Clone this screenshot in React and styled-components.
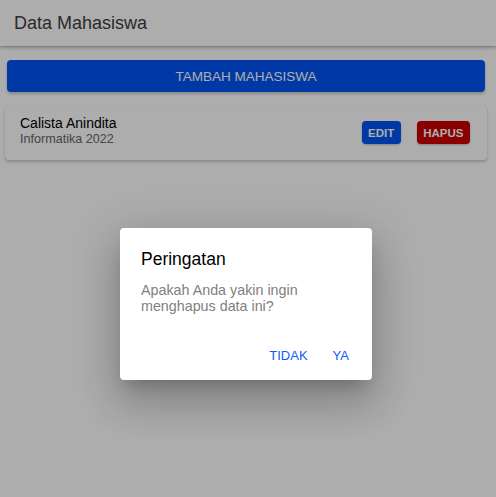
import React from "react";
import styled, { createGlobalStyle } from "styled-components";

const GlobalStyle = createGlobalStyle`
  html, body {
    margin: 0;
    padding: 0;
    background: #ffffff;
    font-family: "Liberation Sans", Arial, sans-serif;
  }
`;

const Page = styled.div`
  position: relative;
  width: 100%;
  height: 497px;
  overflow: hidden;
  background: #ffffff;
`;

const Header = styled.header`
  height: 46px;
  display: flex;
  align-items: center;
  padding: 0 14px;
  background: #ffffff;
  box-shadow: 0 2px 4px rgba(0, 0, 0, 0.22), 0 1px 1px rgba(0, 0, 0, 0.12);
`;

const Title = styled.h1`
  margin: 0;
  font-size: 18px;
  font-weight: 400;
  color: #404040;
`;

const Content = styled.main`
  padding: 14px 9px 0 5px;
  display: flex;
  flex-direction: column;
  gap: 13px;
`;

const AddButton = styled.button`
  margin: 0 2px;
  height: 32px;
  border: none;
  border-radius: 4px;
  background: #0054f4;
  color: #ffffff;
  font-family: inherit;
  font-size: 13.5px;
  box-shadow: 0 2px 3px rgba(0, 0, 0, 0.2);
`;

const Card = styled.div`
  height: 55px;
  display: flex;
  align-items: center;
  justify-content: space-between;
  padding: 0 17px 0 15px;
  background: #ffffff;
  border-radius: 4px;
  box-shadow: 0 2px 3px rgba(0, 0, 0, 0.2), 0 0 1px rgba(0, 0, 0, 0.15);
`;

const Info = styled.div`
  display: flex;
  flex-direction: column;
  margin-top: -4px;
`;

const Name = styled.span`
  font-size: 14px;
  color: #000000;
  line-height: 16px;
`;

const Sub = styled.span`
  font-size: 12.6px;
  color: #666666;
  line-height: 16px;
`;

const Actions = styled.div`
  display: flex;
  gap: 16px;
  align-items: center;
`;

const SmallButton = styled.button`
  height: 23px;
  padding: 0 6.5px;
  border: none;
  border-radius: 4px;
  background: ${(p) => p.$bg};
  color: #ffffff;
  font-family: inherit;
  font-size: 11.5px;
  font-weight: 700;
  box-shadow: 0 1px 2px rgba(0, 0, 0, 0.25);
`;

const Backdrop = styled.div`
  position: absolute;
  inset: 0;
  background: rgba(0, 0, 0, 0.32);
  display: flex;
  align-items: flex-start;
  justify-content: center;
  padding: 228px 4px 0 0;
`;

const Dialog = styled.div`
  width: 252px;
  height: 152px;
  box-sizing: border-box;
  background: #ffffff;
  border-radius: 4px;
  padding: 21px 21px 0 21px;
  display: flex;
  flex-direction: column;
  box-shadow: 0 11px 15px -7px rgba(0, 0, 0, 0.2),
    0 24px 38px 3px rgba(0, 0, 0, 0.14), 0 9px 46px 8px rgba(0, 0, 0, 0.12);
`;

const DialogTitle = styled.h2`
  margin: 0;
  font-size: 17.5px;
  font-weight: 400;
  color: #000000;
`;

const Message = styled.p`
  margin: 12px 0 0;
  font-size: 14.3px;
  line-height: 16px;
  color: #808080;
  width: 190px;
`;

const DialogActions = styled.div`
  margin-top: auto;
  margin-bottom: 17px;
  margin-right: 2px;
  display: flex;
  justify-content: flex-end;
  gap: 25px;
`;

const TextButton = styled.button`
  border: none;
  background: none;
  padding: 0;
  font-family: inherit;
  font-size: 13px;
  color: #0a5cff;
`;

export default function App() {
  return (
    <Page>
      <GlobalStyle />
      <Header>
        <Title>Data Mahasiswa</Title>
      </Header>
      <Content>
        <AddButton>TAMBAH MAHASISWA</AddButton>
        <Card>
          <Info>
            <Name>Calista Anindita</Name>
            <Sub>Informatika 2022</Sub>
          </Info>
          <Actions>
            <SmallButton $bg="#0054f0">EDIT</SmallButton>
            <SmallButton $bg="#cc0000">HAPUS</SmallButton>
          </Actions>
        </Card>
      </Content>
      <Backdrop>
        <Dialog>
          <DialogTitle>Peringatan</DialogTitle>
          <Message>Apakah Anda yakin ingin menghapus data ini?</Message>
          <DialogActions>
            <TextButton>TIDAK</TextButton>
            <TextButton>YA</TextButton>
          </DialogActions>
        </Dialog>
      </Backdrop>
    </Page>
  );
}
